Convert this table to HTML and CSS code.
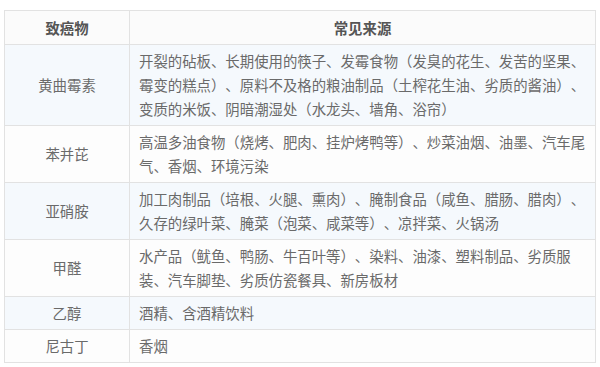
FILE: index.html
```html
<!DOCTYPE html>
<html lang="zh-CN">
<head>
<meta charset="utf-8">
<link rel="stylesheet" href="styles.css">
</head>
<body>
<table class="carcinogen-table">
  <thead>
    <tr>
      <th class="col-name">致癌物</th>
      <th class="col-source">常见来源</th>
    </tr>
  </thead>
  <tbody>
    <tr class="row-alt">
      <td class="name">黄曲霉素</td>
      <td class="source">开裂的砧板、长期使用的筷子、发霉食物（发臭的花生、发苦的坚果、霉变的糕点）、原料不及格的粮油制品（土榨花生油、劣质的酱油）、变质的米饭、阴暗潮湿处（水龙头、墙角、浴帘）</td>
    </tr>
    <tr>
      <td class="name">苯并芘</td>
      <td class="source">高温多油食物（烧烤、肥肉、挂炉烤鸭等）、炒菜油烟、油墨、汽车尾气、香烟、环境污染</td>
    </tr>
    <tr class="row-alt">
      <td class="name">亚硝胺</td>
      <td class="source">加工肉制品（培根、火腿、熏肉）、腌制食品（咸鱼、腊肠、腊肉）、久存的绿叶菜、腌菜（泡菜、咸菜等）、凉拌菜、火锅汤</td>
    </tr>
    <tr>
      <td class="name">甲醛</td>
      <td class="source">水产品（鱿鱼、鸭肠、牛百叶等）、染料、油漆、塑料制品、劣质服装、汽车脚垫、劣质仿瓷餐具、新房板材</td>
    </tr>
    <tr class="row-alt">
      <td class="name">乙醇</td>
      <td class="source">酒精、含酒精饮料</td>
    </tr>
    <tr>
      <td class="name">尼古丁</td>
      <td class="source">香烟</td>
    </tr>
  </tbody>
</table>
</body>
</html>
```
FILE: styles.css
```css
html, body {
  margin: 0;
  background: #ffffff;
}
body {
  padding: 10px 4px 0 4px;
  font-family: "Noto Sans CJK SC", "Noto Sans", sans-serif;
  color: #6a6a6a;
}
.carcinogen-table {
  width: 592px;
  border-collapse: collapse;
  table-layout: fixed;
  font-size: 14.4px;
  line-height: 24px;
  text-spacing-trim: space-all;
  font-feature-settings: "halt" 0, "chws" 0;
}
.carcinogen-table th,
.carcinogen-table td {
  border: 1px solid #e2e2e2;
  vertical-align: middle;
}
.carcinogen-table th {
  background: #fbfbfb;
  color: #555555;
  font-weight: bold;
  text-align: center;
  height: 33px;
  padding: 0;
}
.col-name {
  width: 124px;
}
.carcinogen-table td {
  background: #fdfdfd;
  padding: 4px 9px 4px 9px;
}
.carcinogen-table .row-alt td {
  background: #f5f9fd;
}
.carcinogen-table td.name {
  text-align: center;
  padding: 4px 4px;
}
```
